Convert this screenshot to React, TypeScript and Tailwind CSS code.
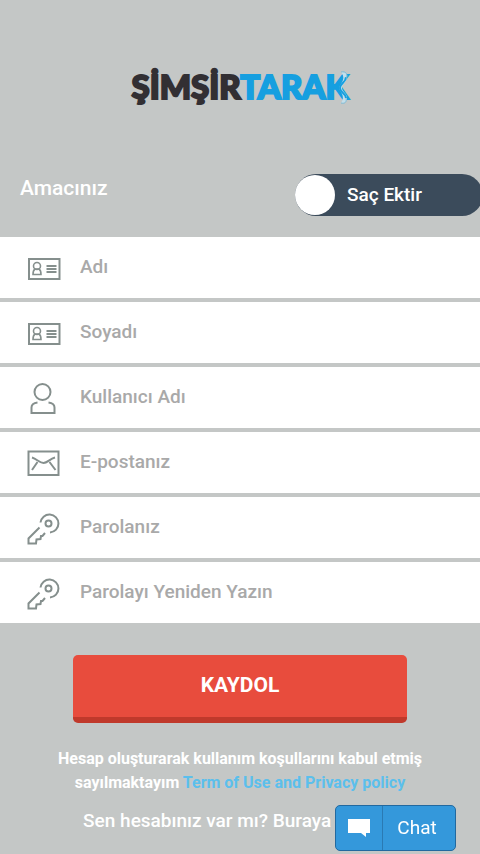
import { useState, type ReactNode } from 'react';

function IdCardIcon() {
  return (
    <svg width="36" height="36" viewBox="0 0 36 36" fill="none" stroke="currentColor" strokeWidth="2">
      <rect x="3" y="9" width="30.500" height="20" />
      <circle cx="11" cy="16" r="3.500" strokeWidth="1.600" />
      <path d="M9 19c-1.500 1-2 3-2 5.500h8c0-2.500-.5-4.500-2-5.500z" strokeWidth="1.600" />
      <path d="M20.500 16h10M20.500 19h10M20.500 22h10" strokeWidth="1.800" />
    </svg>
  );
}

function UserIcon() {
  return (
    <svg width="36" height="36" viewBox="0 0 36 36" fill="none" stroke="currentColor" strokeWidth="2">
      <circle cx="16.500" cy="12" r="8" />
      <path d="M11.500 22.500c-4 .5-6 2.500-6 5v5.500h23v-5.500c0-2.500-2-4.500-6-5" />
    </svg>
  );
}

function MailIcon() {
  return (
    <svg width="36" height="36" viewBox="0 0 36 36" fill="none" stroke="currentColor" strokeWidth="2">
      <rect x="2.500" y="6.500" width="30" height="23.500" />
      <path d="M6 12.500c5 1.500 7.500 5.500 11.500 5.500s6-4 11.500-5.500" />
      <path d="M11.500 17L6 25M23.500 17l6 8" />
    </svg>
  );
}

function KeyIcon() {
  return (
    <svg width="36" height="36" viewBox="0 0 36 36" fill="none" stroke="currentColor" strokeWidth="2">
      <circle cx="22.500" cy="13.500" r="3" />
      <path d="M14.500 12.500a9 9 0 1 1 9.500 10" />
      <path d="M13.500 17.500L2.500 28.500v5h7.500l.5-4 4-.5.500-3h1.500l2.500-3" />
    </svg>
  );
}

interface FieldProps {
  id: string;
  label: string;
  type?: string;
  icon: ReactNode;
}

function Field({ id, label, type = 'text', icon }: FieldProps) {
  return (
    <div className="flex h-[61px] items-center bg-white pl-[26px]">
      <label htmlFor={id} className="shrink-0 text-[#858f8d]">
        {icon}
      </label>
      <input
        id={id}
        name={id}
        type={type}
        aria-label={label}
        placeholder={label}
        className="h-full min-w-0 flex-1 bg-transparent pr-5 pb-0.5 pl-[18px] text-[19px] font-medium text-gray-600 outline-none placeholder:text-[#a9a9a9]"
      />
    </div>
  );
}

function Logo() {
  return (
    <h1 className="relative font-[Lato,sans-serif] text-[33px] leading-10 font-black text-[#322f33] [-webkit-text-stroke:2px_currentColor]">
      ŞİMŞİR<span className="text-[#169fe0]">TARAK</span>
      {/* comb edge on the last letter */}
      <svg className="absolute top-1 right-0" width="12" height="36" viewBox="0 0 12 36" fill="none">
        <path d="M5 2c5-1 7 2 6 6-1 5-5 6-5 10s5 5 5 10c0 4-2 6-6 5 3-4 2-8 0-11-2-2-2-6 0-8 2-3 4-7 0-12z" fill="#c3dfeb" />
        <path d="M10 7c0 6-6 6-6 11s6 5 6 10" stroke="#169fe0" strokeWidth="2" />
        <path d="M5 2c5-1 7 2 5 6M10 28c1 4-1 6-5 5" stroke="#7db9d3" strokeWidth="1" />
      </svg>
    </h1>
  );
}

export default function App() {
  const [purpose, setPurpose] = useState(false);

  return (
    <main className="min-h-screen overflow-hidden bg-[#c4c7c6] font-[Roboto,sans-serif] text-white">
      <header className="flex justify-center pt-[66px]">
        <Logo />
      </header>

      <form onSubmit={(e) => e.preventDefault()}>
        <div className="mt-[68px] flex h-[63px] items-start justify-between pl-5">
          <span className="text-[21px] leading-7 font-medium">Amacınız</span>
          <label className="-mr-[3px] flex h-[42px] w-[188px] shrink-0 cursor-pointer items-center rounded-full bg-[#3b4b5b]">
            <input
              type="checkbox"
              checked={purpose}
              onChange={(e) => setPurpose(e.target.checked)}
              className="size-10 appearance-none rounded-full bg-white"
            />
            <span className="pl-3 text-[19px] font-medium">Saç Ektir</span>
          </label>
        </div>

        <div className="flex flex-col gap-1">
          <Field id="firstName" label="Adı" icon={<IdCardIcon />} />
          <Field id="lastName" label="Soyadı" icon={<IdCardIcon />} />
          <Field id="username" label="Kullanıcı Adı" icon={<UserIcon />} />
          <Field id="email" label="E-postanız" type="email" icon={<MailIcon />} />
          <Field id="password" label="Parolanız" type="password" icon={<KeyIcon />} />
          <Field id="passwordAgain" label="Parolayı Yeniden Yazın" type="password" icon={<KeyIcon />} />
        </div>

        <div className="px-[73px] pt-8">
          <button
            type="submit"
            className="h-[68px] w-full rounded-[5px] border-b-[6px] border-[#c0392b] bg-[#e84c3d] text-[21px] font-bold"
          >
            KAYDOL
          </button>
        </div>
      </form>

      <p className="mx-auto mt-6 max-w-[400px] text-center text-base leading-6 font-bold">
        Hesap oluşturarak kullanım koşullarını kabul etmiş sayılmaktayım{' '}
        <a href="#terms" className="text-[#5bbfec]">Term of Use and Privacy policy</a>
      </p>
      <p className="mt-3 text-center text-[19px] leading-7 font-medium">
        Sen hesabınız var mı? <a href="#login">Buraya tıklayın</a>
      </p>

      <button
        type="button"
        className="fixed right-6 bottom-[3px] flex h-[46px] w-[121px] items-stretch rounded-[5px] border border-[#22699f] bg-[#3498db] text-[19px]"
      >
        <span className="flex w-[47px] items-center justify-center border-r border-[#2a7ab3]">
          <svg width="24" height="20" viewBox="0 0 24 20" fill="currentColor">
            <path d="M1 1h22v14h-4v4l-5-4H1z" />
          </svg>
        </span>
        <span className="flex flex-1 items-center justify-center pr-1">Chat</span>
      </button>
    </main>
  );
}
